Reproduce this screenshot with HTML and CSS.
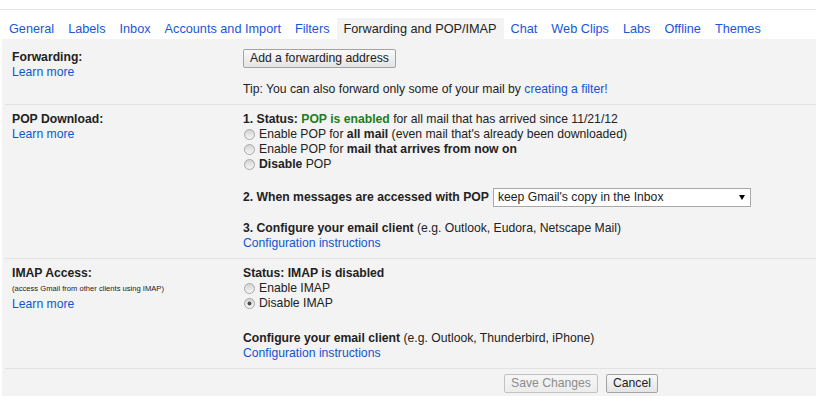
FILE: index.html
```html
<!DOCTYPE html>
<html>
<head>
    <meta charset="utf-8" />
    <title>Settings</title>
    <link rel="stylesheet" href="styles.css">
</head>
<body>
<div class="topbar"></div>
<div class="settings">
    <div class="tabs">
        <a class="tab" href="#">General</a>
        <a class="tab" href="#">Labels</a>
        <a class="tab" href="#">Inbox</a>
        <a class="tab" href="#">Accounts and Import</a>
        <a class="tab" href="#">Filters</a>
        <span class="tab tab-active">Forwarding and POP/IMAP</span>
        <a class="tab" href="#">Chat</a>
        <a class="tab" href="#">Web Clips</a>
        <a class="tab" href="#">Labs</a>
        <a class="tab" href="#">Offline</a>
        <a class="tab" href="#">Themes</a>
    </div>
    <div class="panel">
        <div class="row">
            <div class="label">
                <b>Forwarding:</b>
                <a href="#">Learn more</a>
            </div>
            <div class="value">
                <button class="btn btn-first">Add a forwarding address</button>
                <div class="tip">Tip: You can also forward only some of your mail by <a href="#">creating a filter!</a></div>
            </div>
        </div>
        <div class="row">
            <div class="label">
                <b>POP Download:</b>
                <a href="#">Learn more</a>
            </div>
            <div class="value">
                <div><b>1. Status:</b> <b class="ok">POP is enabled</b> for all mail that has arrived since 11/21/12</div>
                <label class="opt"><input type="radio" name="pop">Enable POP for <b>all mail</b> (even mail that's already been downloaded)</label>
                <label class="opt"><input type="radio" name="pop">Enable POP for <b>mail that arrives from now on</b></label>
                <label class="opt"><input type="radio" name="pop"><b>Disable</b> POP</label>
                <div class="when">
                    <b>2. When messages are accessed with POP</b>
                    <span class="select-wrap">
                        <select class="dropdown">
                            <option>keep Gmail's copy in the Inbox</option>
                            <option>mark Gmail's copy as read</option>
                            <option>archive Gmail's copy</option>
                            <option>delete Gmail's copy</option>
                        </select>
                    </span>
                </div>
                <div class="config"><b>3. Configure your email client</b> (e.g. Outlook, Eudora, Netscape Mail)</div>
                <a href="#">Configuration instructions</a>
            </div>
        </div>
        <div class="row">
            <div class="label">
                <b>IMAP Access:</b>
                <span class="small">(access Gmail from other clients using IMAP)</span>
                <a href="#">Learn more</a>
            </div>
            <div class="value">
                <b>Status: IMAP is disabled</b>
                <label class="opt"><input type="radio" name="imap">Enable IMAP</label>
                <label class="opt"><input type="radio" name="imap" checked>Disable IMAP</label>
                <div class="config config-imap"><b>Configure your email client</b> (e.g. Outlook, Thunderbird, iPhone)</div>
                <a href="#">Configuration instructions</a>
            </div>
        </div>
        <div class="actions">
            <button class="btn" disabled>Save Changes</button>
            <button class="btn">Cancel</button>
        </div>
    </div>
</div>
</body>
</html>
```

FILE: styles.css
```css
*{margin:0;padding:0;box-sizing:border-box;}
body{font:12.2px/15px "Liberation Sans",Arial,sans-serif;color:#222;background:#fff;}
a{color:#15c;text-decoration:none;}
b{font-weight:bold;}

.topbar{height:10px;border-bottom:1px solid #e5e5e5;}
.settings{margin:8px 0 0 2px;}

/* tabs */
.tabs{display:flex;}
.tab{padding:4px 7px 2px;font-size:12.7px;line-height:15px;}
a.tab{color:#1a56d6;}
.tab-active{background:#f3f3f3;color:#222;}

/* panel */
.panel{background:#f3f3f3;padding-top:4px;}
.row{
    display:grid;
    grid-template-columns:231px 1fr;
    margin-left:3px;
    padding:7px 0 7px 7px;
    border-bottom:1px solid #e2e2e2;
}
.label,.value{display:flex;flex-direction:column;align-items:flex-start;}
.small{font-size:7.6px;line-height:16px;}

.btn{
    font:inherit;
    color:#222;
    height:19px;
    line-height:17px;
    padding:0 6px;
    border:1px solid #a3a3a3;
    border-radius:2px;
    background:linear-gradient(#f9f9f9,#e4e4e4);
}
.btn[disabled]{color:#8c8c8c;border-color:#c2c2c2;background:linear-gradient(#f6f6f6,#ececec);}
.btn-first{margin-top:-1px;}
.tip{margin-top:14px;}
.ok{color:#1b801b;}

.opt{display:block;}
.opt input{
    -webkit-appearance:none;
    appearance:none;
    display:inline-block;
    width:11px;
    height:11px;
    margin:0 4px 0 1px;
    vertical-align:-2px;
    border:1px solid #a8a8a8;
    border-radius:50%;
    background:linear-gradient(#d4d4d4,#f6f6f6);
}
.opt input:checked{
    background:radial-gradient(circle,#4a4a4a 0,#4a4a4a 1.6px,transparent 2.3px),linear-gradient(#d4d4d4,#f6f6f6);
}

.when{display:flex;align-items:center;gap:4px;margin-top:16px;}
.select-wrap{position:relative;display:block;}
.select-wrap:after{
    content:"";
    position:absolute;
    right:6px;
    top:7px;
    border-left:3px solid transparent;
    border-right:3px solid transparent;
    border-top:5px solid #000;
}
.dropdown{
    -webkit-appearance:none;
    appearance:none;
    display:block;
    width:258px;
    height:19px;
    padding:0 4px;
    font:inherit;
    color:#222;
    background:#fff;
    border:1px solid #a9a9a9;
    border-radius:0;
}
.config{margin-top:14px;}
.config-imap{margin-top:20px;}

.actions{display:flex;gap:8px;margin-left:3px;padding:5px 0 3px 499px;}
```
